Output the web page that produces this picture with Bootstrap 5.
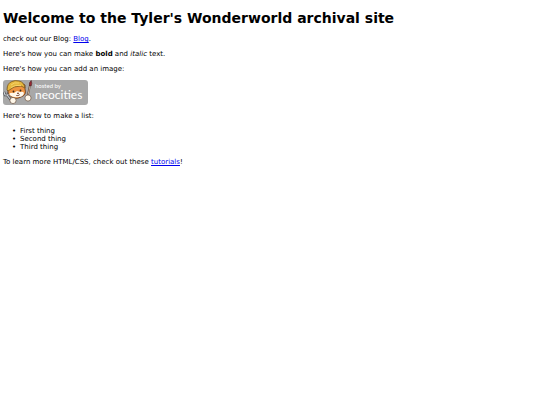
<!DOCTYPE html>
<html lang="en">
<head>
<meta charset="utf-8">
<meta name="viewport" content="width=device-width, initial-scale=1">
<title>Tyler's Wonderworld archival site</title>
<link href="https://cdn.jsdelivr.net/npm/bootstrap@5.3.0/dist/css/bootstrap.min.css" rel="stylesheet">
<style>
  body { font-family: "DejaVu Sans", Verdana, sans-serif; font-size: 7px; line-height: 8px; color: #000; background: #fff; }
  .page { padding: 10px 3px; }
  .page h1 { font-size: 14px; line-height: 17px; margin-bottom: 8px; }
  .page p { margin-bottom: 7px; }
  .page ul { margin-bottom: 7px; padding-left: 9px; }
  .page li::before { content: "•"; width: 4px; }
  .page a { color: #0000ee; text-decoration: underline; }
  .hosted { width: 85px; height: 25px; }
</style>
</head>
<body>
<main class="page">
  <h1 class="fw-bold">Welcome to the Tyler's Wonderworld archival site</h1>
  <p>check out our Blog: <a href="#blog">Blog</a>.</p>
  <p>Here's how you can make <strong>bold</strong> and <em>italic</em> text.</p>
  <p>Here's how you can add an image:</p>
  <p><a href="#neocities" class="d-block hosted" aria-label="Hosted by Neocities">
    <svg class="d-block w-100 h-100" viewBox="0 0 85 25" aria-hidden="true">
      <rect width="85" height="25" rx="3" fill="#a8a8a8"/>
      <!-- wrench, left -->
      <path d="M1 12l1 3 3 0 1-3M4 15l4 5" fill="none" stroke="#494b50" stroke-width="2.4"/>
      <path d="M1 12l1 3 3 0 1-3M4 15l4 5" fill="none" stroke="#d2d5da" stroke-width="1.1"/>
      <!-- brush, right -->
      <path d="M24.5 17L27 5" stroke="#5a463a" stroke-width="1.8"/>
      <path d="M24.5 17L27 6" stroke="#e0c3a4" stroke-width=".8"/>
      <path d="M26.4 5.500q-.6-3 1.800-5 1.200 3 0 5.500z" fill="#9a2630" stroke="#4c2427" stroke-width=".6"/>
      <!-- cat head -->
      <path d="M5 7l1-2 14-1 2 1 0 4q2 6-4 8-6 3-10-.5Q4 14 5 7z" fill="#ee9440" stroke="#60371e" stroke-width=".8"/>
      <path d="M6 14q2-2 5-1l3-2 3 1q3-1 4 1-1 4-5 4-7 1-10-3z" fill="#fff8ea"/>
      <!-- helmet -->
      <path d="M4 10Q4 3 9 1.500q3-1.500 7-.5 5 1 6 7l-4-2-7 1-6 4z" fill="#e6b83e" stroke="#79551d" stroke-width=".8"/>
      <path d="M8 5q3-3 8-2M8 7.500q4-3 10-2" fill="none" stroke="#f8dc75" stroke-width=".8"/>
      <circle cx="10.500" cy="11.500" r=".9" fill="#382719"/>
      <circle cx="17.500" cy="10.500" r=".9" fill="#382719"/>
      <path d="M14 13h2l-1 1zM13 15.500q2 1 4-1" fill="#6b392b" stroke="#6b392b" stroke-width=".5"/>
      <!-- paws -->
      <circle cx="10" cy="20.500" r="3.100" fill="#fff8ea" stroke="#6e5444" stroke-width=".7"/>
      <circle cx="25" cy="18" r="3.100" fill="#fff8ea" stroke="#6e5444" stroke-width=".7"/>
      <g fill="#fff" font-family="Lato, sans-serif">
        <text x="32" y="8" font-size="6">hosted by</text>
        <text x="32" y="19" font-size="12">neocities</text>
      </g>
    </svg>
  </a></p>
  <p>Here's how to make a list:</p>
  <ul class="list-unstyled">
    <li class="d-flex gap-1">First thing</li>
    <li class="d-flex gap-1">Second thing</li>
    <li class="d-flex gap-1">Third thing</li>
  </ul>
  <p>To learn more HTML/CSS, check out these <a href="#tutorials">tutorials</a>!</p>
</main>
<script src="https://cdn.jsdelivr.net/npm/bootstrap@5.3.0/dist/js/bootstrap.bundle.min.js"></script>
</body>
</html>
